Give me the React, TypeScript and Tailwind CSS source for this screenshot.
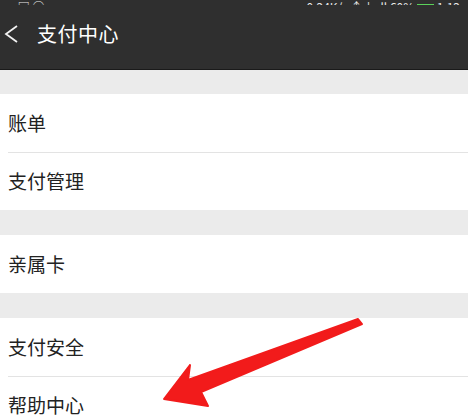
import React from "react";

const font = { fontFamily: '"Noto Sans CJK SC", "Noto Sans", sans-serif' };

function Row({ label, divider }: { label: string; divider?: boolean }) {
  return (
    <div className="bg-white">
      {divider && <div className="ml-2 h-px bg-[#e3e3e3]" />}
      <div className={`flex items-center pl-2 text-[19px] text-[#222] ${divider ? "h-[57px]" : "h-[58px]"}`}>{label}</div>
    </div>
  );
}

export default function App() {
  return (
    <div className="relative w-[468px] h-[417px] overflow-hidden bg-[#ebebeb]" style={font}>
      {/* header */}
      <div className="bg-[#2f2f2f] h-[69px] flex flex-col">
        <div className="h-[5px] overflow-hidden flex items-end justify-between px-1 text-[12px] leading-none text-[#e8e8e8]">
          <span className="translate-y-[8px]">▭ ▣ ◯</span>
          <span className="translate-y-[8px] pr-1">0.24K/s ↑↓ ıll 60% <span className="inline-block w-[17px] h-[8px] border border-[#5ad15a] bg-[#5ad15a]" /> 1:12</span>
        </div>
        <div className="flex items-center flex-1 pb-[6px]">
          <svg width="16" height="20" viewBox="0 0 16 20" className="ml-[3px]">
            <path d="M14 2 L3 10 L14 18" fill="none" stroke="#f2f2f2" strokeWidth="1.8" />
          </svg>
          <span className="ml-[18px] text-[20px] text-white tracking-[0.5px]">支付中心</span>
        </div>
      </div>
      <div className="h-px bg-[#1a1a1a]" />

      <div className="h-[24px]" />
      <Row label="账单" />
      <Row label="支付管理" divider />
      <div className="h-[25px]" />
      <Row label="亲属卡" />
      <div className="h-[25px]" />
      <Row label="支付安全" />
      <Row label="帮助中心" divider />

      {/* red arrow annotation */}
      <svg className="absolute left-0 top-0" width="468" height="417" viewBox="0 0 468 417">
        <polygon
          points="164,399 190,365 188,380 358,319 362,324 201,392 208,406"
          fill="#f21b1b"
          stroke="#f21b1b"
          strokeWidth="2"
          strokeLinejoin="round"
        />
      </svg>
    </div>
  );
}
